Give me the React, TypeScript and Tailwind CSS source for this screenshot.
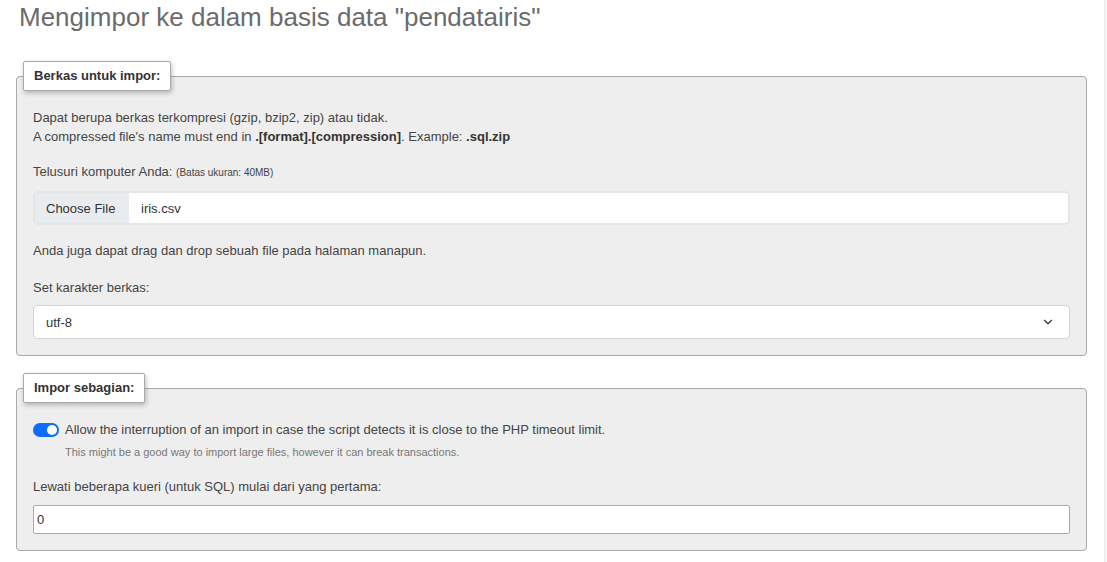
import { ChevronDown } from 'lucide-react'

const font = { fontFamily: '"Liberation Sans", Arial, sans-serif' }

function Legend({ children }: { children: React.ReactNode }) {
  return (
    <legend className="ml-[6px] rounded-[2px] border border-[#aaa] bg-white px-[10px] py-[5px] text-[13px] font-bold leading-[18px] text-[#333] shadow-[1px_2px_5px_rgba(0,0,0,0.25)]">
      {children}
    </legend>
  )
}

function Toggle() {
  return (
    <span className="flex h-[14px] w-[26px] shrink-0 items-center justify-end rounded-full bg-[#0d6efd] pr-[2px]">
      <span className="h-[10px] w-[10px] rounded-full bg-white" />
    </span>
  )
}

export default function App() {
  return (
    <div className="flex min-h-screen bg-white text-[13px] leading-[19px] text-[#444]" style={font}>
      <div className="flex-1 pl-4 pr-[17px]">
        <h2 className="pl-[3px] pt-[2px] text-[26px] leading-[30px] font-normal text-[#6b6b6b]">
          Mengimpor ke dalam basis data "pendatairis"
        </h2>

        <fieldset className="mt-[29px] rounded-[4px] border border-[#aaa] bg-[#eee] p-0">
          <Legend>Berkas untuk impor:</Legend>
          <div className="px-4 pt-[17px] pb-[16px]">
            <p>Dapat berupa berkas terkompresi (gzip, bzip2, zip) atau tidak.</p>
            <p>
              A compressed file's name must end in <b className="text-[#333]">.[format].[compression]</b>. Example:{' '}
              <b className="text-[#333]">.sql.zip</b>
            </p>

            <p className="mt-[16px]">
              Telusuri komputer Anda: <span className="text-[10px]">(Batas ukuran: 40MB)</span>
            </p>
            <div className="mt-[9px] flex h-[34px] items-stretch overflow-hidden rounded-[5px] border-2 border-[#e6e6e6] bg-white">
              <div className="flex w-[94px] items-center bg-[#e9ecef] pl-[11px] text-[#333]">Choose File</div>
              <div className="flex items-center pl-[12px] text-[#333]">iris.csv</div>
            </div>

            <p className="mt-[16px]">Anda juga dapat drag dan drop sebuah file pada halaman manapun.</p>

            <p className="mt-[18px]">Set karakter berkas:</p>
            <div className="mt-[8px] flex h-[34px] items-center justify-between rounded-[4px] border border-[#d4d4d4] bg-white pl-[12px] pr-[14px] text-[#333]">
              <span>utf-8</span>
              <ChevronDown size={14} strokeWidth={2} className="text-[#333]" />
            </div>
          </div>
        </fieldset>

        <fieldset className="mt-[17px] rounded-[4px] border border-[#aaa] bg-[#eee] p-0">
          <Legend>Impor sebagian:</Legend>
          <div className="px-4 pt-[17px] pb-[16px]">
            <div className="flex items-center gap-[6px]">
              <Toggle />
              <span>Allow the interruption of an import in case the script detects it is close to the PHP timeout limit.</span>
            </div>
            <p className="mt-[5px] pl-[32px] text-[11px] leading-[16px] text-[#777]">
              This might be a good way to import large files, however it can break transactions.
            </p>

            <p className="mt-[17px]">Lewati beberapa kueri (untuk SQL) mulai dari yang pertama:</p>
            <input
              readOnly
              value="0"
              className="mt-[9px] block h-[29px] w-full rounded-[2px] border border-[#aaa] bg-white pl-[3px] text-[13px] text-[#333] outline-none"
              style={font}
            />
          </div>
        </fieldset>
      </div>
      <div className="w-[3px] border-l border-[#e8e8e8] bg-[#f5f5f5]" />
    </div>
  )
}
